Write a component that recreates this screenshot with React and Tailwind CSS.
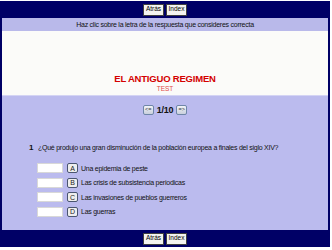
import React from 'react';

const options = [
  { letter: 'A', text: 'Una epidemia de peste' },
  { letter: 'B', text: 'Las crisis de subsistencia periodicas' },
  { letter: 'C', text: 'Las invasiones de pueblos guerreros' },
  { letter: 'D', text: 'Las guerras' },
];

function NavButtons() {
  return (
    <div className="flex items-center justify-center gap-[2px]">
      <button className="h-[12px] w-[21px] border border-[#404040] bg-[#f4f4f0] text-[6.5px] leading-none text-black">
        Atrás
      </button>
      <button className="h-[12px] w-[21px] border border-[#404040] bg-[#f4f4f0] text-[6.5px] leading-none text-black">
        Index
      </button>
    </div>
  );
}

function Arrow({ label }) {
  return (
    <button className="flex h-[10px] w-[11px] items-center justify-center rounded-[2px] border border-[#6f86a8] bg-gradient-to-b from-[#f2f4f8] to-[#c9d0dc] text-[5.5px] leading-none text-[#333]">
      {label}
    </button>
  );
}

export default function App() {
  return (
    <div
      className="h-[250px] w-[332px] bg-white pt-px"
      style={{ fontFamily: '"Liberation Sans", Arial, sans-serif' }}
    >
      <div className="w-[330px] border-x-2 border-[#000066]">
        {/* top bar */}
        <div className="flex h-[17px] items-center justify-center bg-[#000066]">
          <NavButtons />
        </div>

        {/* instruction strip */}
        <div className="flex h-[13px] items-center justify-center bg-[#b9b9ea] text-[7px] leading-none tracking-[-0.25px] text-[#111]">
          Haz clic sobre la letra de la respuesta que consideres correcta
        </div>

        {/* title */}
        <div className="flex h-[64px] flex-col items-center bg-[#fbfbf9] pt-[43px]">
          <div className="text-[9.5px] font-bold leading-[10px] tracking-[-0.2px] text-[#d40000]">
            EL ANTIGUO REGIMEN
          </div>
          <div className="mt-[1px] text-[6.5px] leading-[7px] text-[#e04848]">TEST</div>
        </div>

        {/* question area */}
        <div className="h-[135px] border-t border-[#d4d4f4] bg-[#bbbbee] pt-[9px]">
          <div className="flex items-center justify-center gap-[3px]">
            <Arrow label="<=" />
            <span className="text-[9px] font-bold leading-none tracking-[-0.3px] text-[#111]">1/10</span>
            <Arrow label="=>" />
          </div>

          <div className="mt-[29px] flex items-baseline pl-[27px] text-[#111]">
            <span className="w-[9px] text-[8px] font-bold leading-none">1</span>
            <span className="text-[7px] leading-none tracking-[-0.25px]">
              ¿Qué produjo una gran disminución de la población europea a finales del siglo XIV?
            </span>
          </div>

          <div className="mt-[11px] flex flex-col gap-[4.5px] pl-[35px]">
            {options.map((o) => (
              <div key={o.letter} className="flex h-[10px] items-center">
                <div className="h-[10px] w-[26px] border border-[#d8d8d8] bg-white" />
                <button className="ml-[4px] flex h-[10px] w-[11px] items-center justify-center rounded-[2px] border border-[#4a5570] bg-[#eeeeee] text-[7px] leading-none text-[#222]">
                  {o.letter}
                </button>
                <span className="ml-[3px] text-[7px] leading-none tracking-[-0.25px] text-[#111]">
                  {o.text}
                </span>
              </div>
            ))}
          </div>
        </div>

        {/* bottom bar */}
        <div className="flex h-[17px] items-center justify-center bg-[#000066]">
          <NavButtons />
        </div>
      </div>
    </div>
  );
}
